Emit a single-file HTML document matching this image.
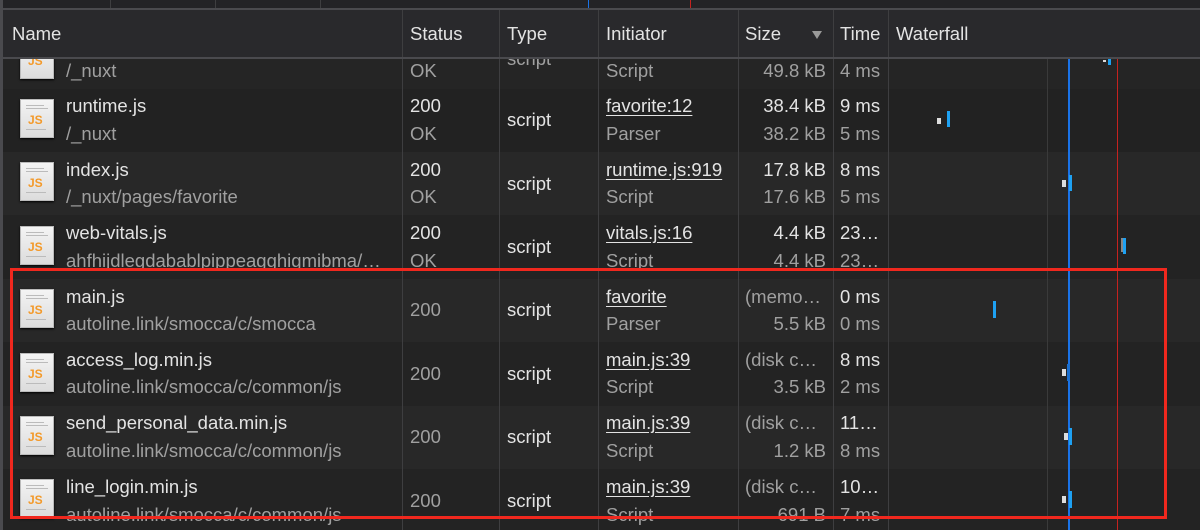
<!DOCTYPE html>
<html><head><style>
*{margin:0;padding:0;box-sizing:border-box}
body{width:1200px;height:530px;overflow:hidden;background:#242424;font-family:"Liberation Sans",Arial,sans-serif;position:relative;color:#e3e3e3}
.a{position:absolute}
.t{position:absolute;font-size:18.5px;white-space:nowrap;line-height:20px}
.r{position:absolute;font-size:18.5px;white-space:nowrap;line-height:20px;right:374px}
.g{color:#a0a0a0}
.u{text-decoration:underline;text-underline-offset:3px}
.ic{position:absolute;width:34px;height:39px;background:linear-gradient(#f4f4f4,#dcdcdc);border:1px solid #bbb;box-shadow:0 1px 2px #000}
.ic b{position:absolute;left:7px;top:13px;font-size:12px;color:#f39a2b;font-weight:bold}
.ic i{position:absolute;left:5px;height:1px;background:#bbb}
.vl{position:absolute;top:10px;width:1px;height:520px;background:#3e3e40}
</style></head><body>
<div class="a" style="left:0;top:0;width:1200px;height:8px;background:#232326"></div>
<div class="a" style="left:0;top:8px;width:1200px;height:2px;background:#4a4a4e"></div>
<div class="a" style="left:0;top:10px;width:1200px;height:47px;background:#29292c"></div>
<div class="a" style="left:0;top:57px;width:1200px;height:2px;background:#4a4a4e"></div>
<div class="a" style="left:0;top:59px;width:1200px;height:30px;background:#252525"></div>
<div class="a" style="left:0;top:89px;width:1200px;height:63px;background:#222222"></div>
<div class="a" style="left:0;top:152px;width:1200px;height:63px;background:#282828"></div>
<div class="a" style="left:0;top:215px;width:1200px;height:64px;background:#232323"></div>
<div class="a" style="left:0;top:279px;width:1200px;height:63px;background:#282828"></div>
<div class="a" style="left:0;top:342px;width:1200px;height:64px;background:#232323"></div>
<div class="a" style="left:0;top:406px;width:1200px;height:63px;background:#282828"></div>
<div class="a" style="left:0;top:469px;width:1200px;height:61px;background:#232323"></div>
<div class="a" style="left:0;top:0;width:3px;height:530px;background:#4a4a4e"></div>
<div class="a" style="left:110px;top:0;width:1px;height:8px;background:#3e3e40"></div>
<div class="a" style="left:215px;top:0;width:1px;height:8px;background:#3e3e40"></div>
<div class="a" style="left:320px;top:0;width:1px;height:8px;background:#3e3e40"></div>
<div class="a" style="left:588px;top:0;width:1px;height:8px;background:#1a73e8"></div>
<div class="a" style="left:690px;top:0;width:1px;height:8px;background:#c5221f"></div>
<div class="vl" style="left:402px"></div><div class="vl" style="left:499px"></div><div class="vl" style="left:598px"></div><div class="vl" style="left:738px"></div><div class="vl" style="left:833px"></div><div class="vl" style="left:888px"></div>
<div class="a" style="left:1047px;top:59px;width:1px;height:471px;background:#3a3a3a"></div>
<div class="a" style="left:1068px;top:59px;width:2px;height:471px;background:#1a73e8"></div>
<div class="a" style="left:1117px;top:59px;width:1px;height:471px;background:#c5221f"></div>

<div class="ic" style="left:20px;top:40px"><b>JS</b></div>
<div class="t g" style="left:66px;top:61px">/_nuxt</div>
<div class="t g" style="left:410px;top:61px">OK</div>
<div class="t g" style="left:507px;top:49px">script</div>
<div class="t g" style="left:606px;top:61px">Script</div>
<div class="r g" style="top:61px">49.8 kB</div>
<div class="t g" style="left:840px;top:61px">4 ms</div>

<div class="ic" style="left:20px;top:99px"><i style="top:5px;width:18px"></i><i style="top:8px;width:22px"></i><i style="top:29px;width:20px"></i><b>JS</b></div>
<div class="t" style="left:66px;top:96px">runtime.js</div><div class="t g" style="left:66px;top:124px">/_nuxt</div>
<div class="t" style="left:410px;top:96px">200</div><div class="t g" style="left:410px;top:124px">OK</div>
<div class="t" style="left:507px;top:110px">script</div>
<div class="t u" style="left:606px;top:96px">favorite:12</div><div class="t g" style="left:606px;top:124px">Parser</div>
<div class="r" style="top:96px">38.4 kB</div><div class="r g" style="top:124px">38.2 kB</div>
<div class="t" style="left:840px;top:96px">9 ms</div><div class="t g" style="left:840px;top:124px">5 ms</div>

<div class="ic" style="left:20px;top:162px"><i style="top:5px;width:18px"></i><i style="top:8px;width:22px"></i><i style="top:29px;width:20px"></i><b>JS</b></div>
<div class="t" style="left:66px;top:160px">index.js</div><div class="t g" style="left:66px;top:187px">/_nuxt/pages/favorite</div>
<div class="t" style="left:410px;top:160px">200</div><div class="t g" style="left:410px;top:187px">OK</div>
<div class="t" style="left:507px;top:174px">script</div>
<div class="t u" style="left:606px;top:160px">runtime.js:919</div><div class="t g" style="left:606px;top:187px">Script</div>
<div class="r" style="top:160px">17.8 kB</div><div class="r g" style="top:187px">17.6 kB</div>
<div class="t" style="left:840px;top:160px">8 ms</div><div class="t g" style="left:840px;top:187px">5 ms</div>

<div class="ic" style="left:20px;top:226px"><i style="top:5px;width:18px"></i><i style="top:8px;width:22px"></i><i style="top:29px;width:20px"></i><b>JS</b></div>
<div class="t" style="left:66px;top:223px">web-vitals.js</div><div class="t g" style="left:66px;top:251px">ahfhijdlegdabablpippeagghigmibma/…</div>
<div class="t" style="left:410px;top:223px">200</div><div class="t g" style="left:410px;top:251px">OK</div>
<div class="t" style="left:507px;top:237px">script</div>
<div class="t u" style="left:606px;top:223px">vitals.js:16</div><div class="t g" style="left:606px;top:251px">Script</div>
<div class="r" style="top:223px">4.4 kB</div><div class="r g" style="top:251px">4.4 kB</div>
<div class="t" style="left:840px;top:223px">23…</div><div class="t g" style="left:840px;top:251px">23…</div>

<div class="ic" style="left:20px;top:289px"><i style="top:5px;width:18px"></i><i style="top:8px;width:22px"></i><i style="top:29px;width:20px"></i><b>JS</b></div>
<div class="t" style="left:66px;top:287px">main.js</div><div class="t g" style="left:66px;top:314px">autoline.link/smocca/c/smocca</div>
<div class="t g" style="left:410px;top:300px">200</div>
<div class="t" style="left:507px;top:300px">script</div>
<div class="t u" style="left:606px;top:287px">favorite</div><div class="t g" style="left:606px;top:314px">Parser</div>
<div class="t g" style="left:745px;top:287px">(memo…</div><div class="r g" style="top:314px">5.5 kB</div>
<div class="t" style="left:840px;top:287px">0 ms</div><div class="t g" style="left:840px;top:314px">0 ms</div>

<div class="ic" style="left:20px;top:353px"><i style="top:5px;width:18px"></i><i style="top:8px;width:22px"></i><i style="top:29px;width:20px"></i><b>JS</b></div>
<div class="t" style="left:66px;top:350px">access_log.min.js</div><div class="t g" style="left:66px;top:377px">autoline.link/smocca/c/common/js</div>
<div class="t g" style="left:410px;top:364px">200</div>
<div class="t" style="left:507px;top:364px">script</div>
<div class="t u" style="left:606px;top:350px">main.js:39</div><div class="t g" style="left:606px;top:377px">Script</div>
<div class="t g" style="left:745px;top:350px">(disk c…</div><div class="r g" style="top:377px">3.5 kB</div>
<div class="t" style="left:840px;top:350px">8 ms</div><div class="t g" style="left:840px;top:377px">2 ms</div>

<div class="ic" style="left:20px;top:416px"><i style="top:5px;width:18px"></i><i style="top:8px;width:22px"></i><i style="top:29px;width:20px"></i><b>JS</b></div>
<div class="t" style="left:66px;top:413px">send_personal_data.min.js</div><div class="t g" style="left:66px;top:441px">autoline.link/smocca/c/common/js</div>
<div class="t g" style="left:410px;top:427px">200</div>
<div class="t" style="left:507px;top:427px">script</div>
<div class="t u" style="left:606px;top:413px">main.js:39</div><div class="t g" style="left:606px;top:441px">Script</div>
<div class="t g" style="left:745px;top:413px">(disk c…</div><div class="r g" style="top:441px">1.2 kB</div>
<div class="t" style="left:840px;top:413px">11…</div><div class="t g" style="left:840px;top:441px">8 ms</div>

<div class="ic" style="left:20px;top:479px"><i style="top:5px;width:18px"></i><i style="top:8px;width:22px"></i><i style="top:29px;width:20px"></i><b>JS</b></div>
<div class="t" style="left:66px;top:477px">line_login.min.js</div><div class="t g" style="left:66px;top:505px">autoline.link/smocca/c/common/js</div>
<div class="t g" style="left:410px;top:491px">200</div>
<div class="t" style="left:507px;top:491px">script</div>
<div class="t u" style="left:606px;top:477px">main.js:39</div><div class="t g" style="left:606px;top:505px">Script</div>
<div class="t g" style="left:745px;top:477px">(disk c…</div><div class="r g" style="top:505px">691 B</div>
<div class="t" style="left:840px;top:477px">10…</div><div class="t g" style="left:840px;top:505px">7 ms</div>

<!-- header on top -->
<div class="a" style="left:3px;top:10px;width:1197px;height:47px;background:#29292c"></div>
<div class="vl" style="left:402px;height:47px"></div><div class="vl" style="left:499px;height:47px"></div><div class="vl" style="left:598px;height:47px"></div><div class="vl" style="left:738px;height:47px"></div><div class="vl" style="left:833px;height:47px"></div><div class="vl" style="left:888px;height:47px"></div>
<div class="t" style="left:12px;top:24px">Name</div>
<div class="t" style="left:410px;top:24px">Status</div>
<div class="t" style="left:507px;top:24px">Type</div>
<div class="t" style="left:606px;top:24px">Initiator</div>
<div class="t" style="left:745px;top:24px">Size</div>
<div class="a" style="left:812px;top:31px;border-left:5px solid transparent;border-right:5px solid transparent;border-top:8px solid #999"></div>
<div class="t" style="left:840px;top:24px">Time</div>
<div class="t" style="left:896px;top:24px">Waterfall</div>
<div class="a" style="left:0;top:57px;width:1200px;height:2px;background:#4a4a4e"></div>

<div class="a" style="left:1103px;top:60px;width:3px;height:2px;background:#ddd"></div>
<div class="a" style="left:1108px;top:59px;width:3px;height:6px;background:#1ea1f2"></div>
<div class="a" style="left:937px;top:118px;width:4px;height:6px;background:#ddd"></div>
<div class="a" style="left:947px;top:111px;width:3px;height:16px;background:#1ea1f2"></div>
<div class="a" style="left:1062px;top:180px;width:4px;height:7px;background:#ddd"></div>
<div class="a" style="left:1069px;top:175px;width:3px;height:16px;background:#1ea1f2"></div>
<div class="a" style="left:1121px;top:238px;width:2px;height:14px;background:#888"></div>
<div class="a" style="left:1123px;top:238px;width:3px;height:16px;background:#1ea1f2"></div>
<div class="a" style="left:993px;top:301px;width:3px;height:17px;background:#1ea1f2"></div>
<div class="a" style="left:1062px;top:369px;width:4px;height:7px;background:#ddd"></div>
<div class="a" style="left:1067px;top:364px;width:3px;height:17px;background:#1a6fd0"></div>
<div class="a" style="left:1064px;top:433px;width:4px;height:7px;background:#ddd"></div>
<div class="a" style="left:1069px;top:428px;width:3px;height:17px;background:#1ea1f2"></div>
<div class="a" style="left:1062px;top:496px;width:4px;height:7px;background:#ddd"></div>
<div class="a" style="left:1069px;top:491px;width:3px;height:17px;background:#1ea1f2"></div>

<div class="a" style="left:10px;top:268px;width:1157px;height:251px;border:3px solid #f0281e"></div>
</body></html>
